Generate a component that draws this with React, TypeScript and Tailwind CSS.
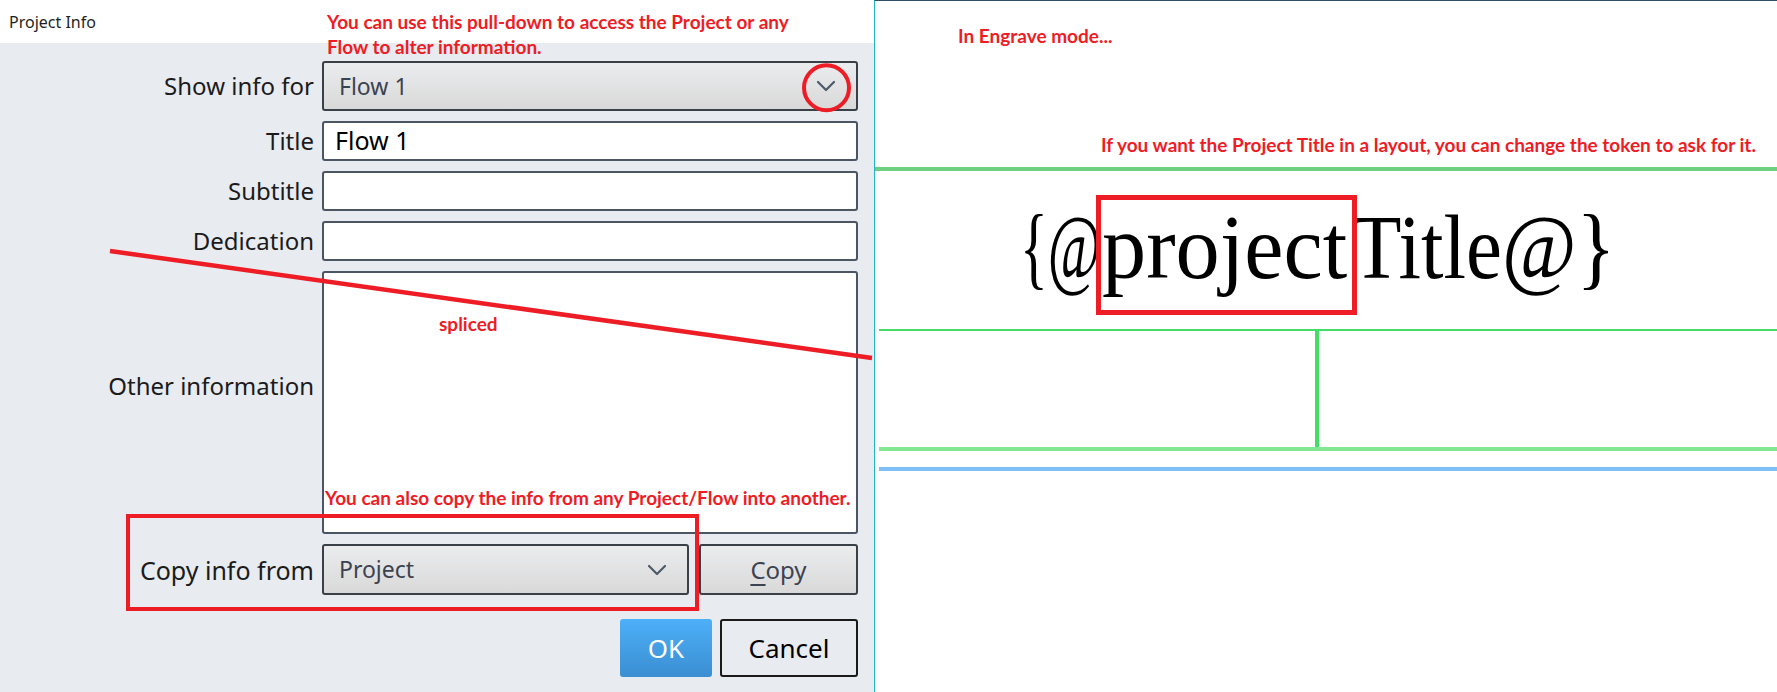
import React from "react";

function Chevron({ className }: { className?: string }) {
  return (
    <svg className={className} width="20" height="12" viewBox="0 0 20 12" fill="none">
      <path d="M2 2 L10 10 L18 2" stroke="#4e5a69" strokeWidth="2.2" strokeLinecap="round" strokeLinejoin="round" />
    </svg>
  );
}

function Label({ children, className = "" }: { children: React.ReactNode; className?: string }) {
  return (
    <div className={"text-right text-[24px] leading-[32px] text-[#1b1b1b] " + className}>{children}</div>
  );
}

function Field({ value, className = "" }: { value?: string; className?: string }) {
  return (
    <div
      className={
        "h-[40px] rounded-[3px] border-2 border-[#4b5563] bg-white pl-[11px] flex items-center text-[25px] text-black " +
        className
      }
    >
      {value}
    </div>
  );
}

function Select({ value, className = "" }: { value: string; className?: string }) {
  return (
    <div
      className={
        "h-[50px] rounded-[3px] border-2 border-[#3a4048] bg-gradient-to-b from-[#ebecee] to-[#d9d9d9] pl-[15px] pr-[20px] flex items-center justify-between text-[23px] text-[#3c4350] " +
        className
      }
    >
      <span>{value}</span>
      <Chevron />
    </div>
  );
}

export default function App() {
  return (
    <div className="relative w-[1777px] h-[692px] flex overflow-hidden bg-white font-['Noto_Sans',sans-serif]">
      {/* Left: dialog */}
      <div className="w-[874px] h-full flex flex-col bg-[#e8ebf0] shrink-0">
        <div className="h-[43px] bg-white flex items-center pl-[9px] text-[16px] text-[#1f1f1f]">Project Info</div>
        <div className="pt-[18px] pr-[16px] grid grid-cols-[314px_1fr] gap-x-[8px] gap-y-[10px] items-center">
          <Label>Show info for</Label>
          <Select value="Flow 1" />
          <Label>Title</Label>
          <Field value="Flow 1" />
          <Label>Subtitle</Label>
          <Field />
          <Label>Dedication</Label>
          <Field />
          <Label className="self-start pt-[99px]">Other information</Label>
          <Field className="h-[263px]" />
          <Label className="text-[25px]">Copy info from</Label>
          <div className="flex gap-[10px]">
            <Select value="Project" className="w-[367px] h-[51px]" />
            <div className="flex-1 h-[51px] rounded-[3px] border-2 border-[#3a4048] bg-gradient-to-b from-[#ebecee] to-[#d9d9d9] flex items-center justify-center text-[24px] text-[#3c4350]">
              <span>
                <span className="underline underline-offset-[5px] decoration-[2px]">C</span>opy
              </span>
            </div>
          </div>
          <div />
          <div className="flex justify-end gap-[8px] mt-[14px]">
            <div className="w-[92px] h-[58px] rounded-[3px] bg-gradient-to-b from-[#4db0f9] to-[#3b8ed1] flex items-center justify-center text-[26px] text-white">
              OK
            </div>
            <div className="w-[138px] h-[58px] rounded-[3px] border-2 border-[#1a1a1a] flex items-center justify-center text-[26px] text-black">
              Cancel
            </div>
          </div>
        </div>
      </div>

      {/* Right: engrave view */}
      <div className="flex-1 h-full border-l border-l-[#1fb5cc] border-t border-t-[#2d4f6a] flex flex-col">
        <div className="h-[166px]" />
        <div className="h-[4px] bg-[#6dd07f]" />
        <div className="h-[158px] pl-[145px] pt-[30px]">
          <div className="flex items-baseline font-['Liberation_Serif',serif] text-[92px] leading-none text-black whitespace-nowrap">
            <span className="inline-block w-[82px]">
              <span className="inline-block origin-left scale-x-[0.63]">{"{@"}</span>
            </span>
            <span className="inline-block w-[250px]">
              <span className="inline-block origin-left scale-x-[0.96]">project</span>
            </span>
            <span className="inline-block w-[266px]">
              <span className="inline-block origin-left scale-x-[0.88]">{"Title@}"}</span>
            </span>
          </div>
        </div>
        <div className="ml-[4px] h-[2px] bg-[#44dd66]" />
        <div className="ml-[4px] h-[116px] flex">
          <div className="w-[436px]" />
          <div className="w-[4px] bg-[#44dd66]" />
        </div>
        <div className="ml-[4px] h-[4px] bg-[#80e891]" />
        <div className="h-[16px]" />
        <div className="ml-[4px] h-[4px] bg-[#80c0f8]" />
      </div>

      {/* Annotations */}
      <svg className="absolute left-0 top-0 pointer-events-none" width="1777" height="692">
        <line x1="110" y1="251" x2="872" y2="358" stroke="#ee1c25" strokeWidth="4.5" />
        <circle cx="826.5" cy="87.7" r="22.5" stroke="#ee1c25" strokeWidth="4" fill="none" />
      </svg>
      <div className="absolute left-[126px] top-[514px] w-[573px] h-[97px] border-[4.5px] border-[#ee1c25] pointer-events-none" />
      <div className="absolute left-[1096px] top-[195px] w-[261px] h-[120px] border-[5px] border-[#ee1c25] pointer-events-none" />

      <div className="absolute left-[327px] top-[9px] font-['Lato',sans-serif] font-bold text-[19px] leading-[25px] text-[#ee1c25] whitespace-nowrap">
        You can use this pull-down to access the Project or any
        <br />
        Flow to alter information.
      </div>
      <div className="absolute left-[958px] top-[23px] font-['Lato',sans-serif] font-bold text-[19px] leading-[25px] text-[#ee1c25] whitespace-nowrap">
        In Engrave mode...
      </div>
      <div className="absolute left-[1101px] top-[132px] font-['Lato',sans-serif] font-bold text-[19px] leading-[25px] text-[#ee1c25] whitespace-nowrap">
        If you want the Project Title in a layout, you can change the token to ask for it.
      </div>
      <div className="absolute left-[439px] top-[311px] font-['Lato',sans-serif] font-bold text-[19px] leading-[25px] text-[#ee1c25]">
        spliced
      </div>
      <div className="absolute left-[325px] top-[485px] font-['Lato',sans-serif] font-bold text-[19px] leading-[25px] text-[#ee1c25] whitespace-nowrap">
        You can also copy the info from any Project/Flow into another.
      </div>
    </div>
  );
}
